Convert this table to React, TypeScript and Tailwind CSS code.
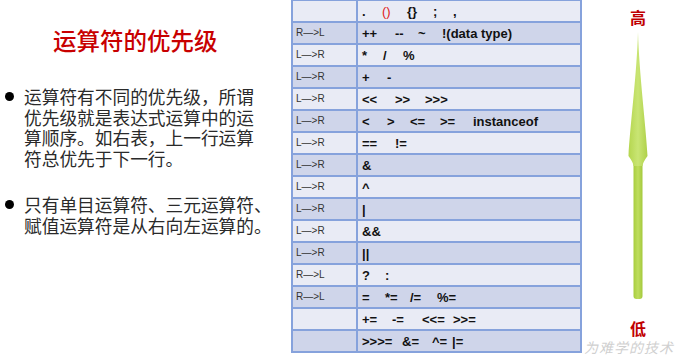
const rows: { dir: string; ops: { t: string; w?: number; red?: boolean }[] }[] = [
  { dir: '', ops: [{ t: '.', w: 20 }, { t: '()', w: 25, red: true }, { t: '{}', w: 26 }, { t: ';', w: 20 }, { t: ',' }] },
  { dir: 'R—>L', ops: [{ t: '++', w: 33 }, { t: '--', w: 23 }, { t: '~', w: 24 }, { t: '!(data type)' }] },
  { dir: 'L—>R', ops: [{ t: '*', w: 21 }, { t: '/', w: 20 }, { t: '%' }] },
  { dir: 'L—>R', ops: [{ t: '+', w: 25 }, { t: '-' }] },
  { dir: 'L—>R', ops: [{ t: '<<', w: 33 }, { t: '>>', w: 30 }, { t: '>>>' }] },
  { dir: 'L—>R', ops: [{ t: '<', w: 25 }, { t: '>', w: 23 }, { t: '<=', w: 30 }, { t: '>=', w: 33 }, { t: 'instanceof' }] },
  { dir: 'L—>R', ops: [{ t: '==', w: 33 }, { t: '!=' }] },
  { dir: 'L—>R', ops: [{ t: '&' }] },
  { dir: 'L—>R', ops: [{ t: '^' }] },
  { dir: 'L—>R', ops: [{ t: '|' }] },
  { dir: 'L—>R', ops: [{ t: '&&' }] },
  { dir: 'L—>R', ops: [{ t: '||' }] },
  { dir: 'R—>L', ops: [{ t: '?', w: 23 }, { t: ':' }] },
  { dir: 'R—>L', ops: [{ t: '=', w: 23 }, { t: '*=', w: 25 }, { t: '/=', w: 27 }, { t: '%=' }] },
  { dir: '', ops: [{ t: '+=', w: 30 }, { t: '-=', w: 30 }, { t: '<<=', w: 31 }, { t: '>>=' }] },
  { dir: '', ops: [{ t: '>>>=', w: 40 }, { t: '&=', w: 30 }, { t: '^=', w: 20 }, { t: '|=' }] },
];

const cjk = { fontFamily: '"Noto Sans CJK SC", "Noto Sans", sans-serif' };
const arial = { fontFamily: '"Liberation Sans", Arial, sans-serif' };

function Arrow() {
  return (
    <svg width="30" height="270" viewBox="0 0 30 270">
      <defs>
        <linearGradient id="shaft" x1="0" x2="1" y1="0" y2="0">
          <stop offset="0" stopColor="#a8cd3e" />
          <stop offset="0.5" stopColor="#bfde5e" />
          <stop offset="1" stopColor="#a4c93c" />
        </linearGradient>
        <linearGradient id="head" x1="0" x2="1" y1="0" y2="0">
          <stop offset="0" stopColor="#b5d64f" />
          <stop offset="0.5" stopColor="#c9e574" />
          <stop offset="1" stopColor="#afd148" />
        </linearGradient>
      </defs>
      <rect x="10.5" y="120" width="9" height="147" rx="3" fill="url(#shaft)" />
      <path d="M15 0 C16 40 23 95 24.5 124 Q20 130 19.5 134 L10.5 134 Q10 130 5.5 124 C7 95 14 40 15 0 Z" fill="url(#head)" />
    </svg>
  );
}

function Bullet() {
  return (
    <span className="w-[24px] shrink-0 pl-[5px] pt-[6px]">
      <span className="block w-[9px] h-[9px] rounded-full bg-black" />
    </span>
  );
}

export default function App() {
  return (
    <div className="relative w-[680px] h-[356px] bg-white flex overflow-hidden">
      <div className="w-[291px] shrink-0" style={cjk}>
        <div className="mt-[27px] pl-[53px] text-[23.5px] leading-[26px] font-medium text-[#c80000]">运算符的优先级</div>
        <div className="mt-[33px] flex text-[17.7px] leading-[20.7px] text-[#2a2a2a]">
          <Bullet />
          <div>
            运算符有不同的优先级，所谓<br />
            优先级就是表达式运算中的运<br />
            算顺序。如右表，上一行运算<br />
            符总优先于下一行。
          </div>
        </div>
        <div className="mt-[25px] flex text-[17.7px] leading-[20.7px] text-[#2a2a2a]">
          <Bullet />
          <div>
            只有单目运算符、三元运算符、<br />
            赋值运算符是从右向左运算的。
          </div>
        </div>
      </div>

      <div className="w-[291px] shrink-0 mt-[-1px] self-start border-t-2 border-l-2 border-r-2 border-[#86a2dc]" style={arial}>
        {rows.map((r, i) => (
          <div key={i} className={`flex h-[22px] border-b-2 border-[#86a2dc] ${i % 2 === 0 ? 'bg-[#e9ebf5]' : 'bg-[#cfd5ea]'}`}>
            <div className="w-[65px] shrink-0 border-r-2 border-[#86a2dc] pl-[3px] text-[10px] leading-[19px] text-[#333]">{r.dir}</div>
            <div className="flex pl-[4px] pt-[1px] text-[13px] leading-[19px] font-bold text-[#111]">
              {r.ops.map((o, j) => (
                <span key={j} className={`whitespace-pre ${o.red ? 'text-[#e02020] font-normal' : ''}`} style={o.w ? { width: o.w } : undefined}>{o.t}</span>
              ))}
            </div>
          </div>
        ))}
      </div>

      <div className="flex-1 flex flex-col items-center pl-[14px]" style={cjk}>
        <div className="mt-[7px] text-[16px] leading-[20px] font-bold text-[#c00000]">高</div>
        <div className="mt-[5px]"><Arrow /></div>
        <div className="mt-[16px] text-[16px] leading-[20px] font-bold text-[#c00000]">低</div>
      </div>

      <div className="absolute right-[6px] bottom-[1px] text-[14px] leading-[16px] italic text-[#d0d0d0] tracking-[1px]" style={cjk}>为难学的技术</div>
    </div>
  );
}
